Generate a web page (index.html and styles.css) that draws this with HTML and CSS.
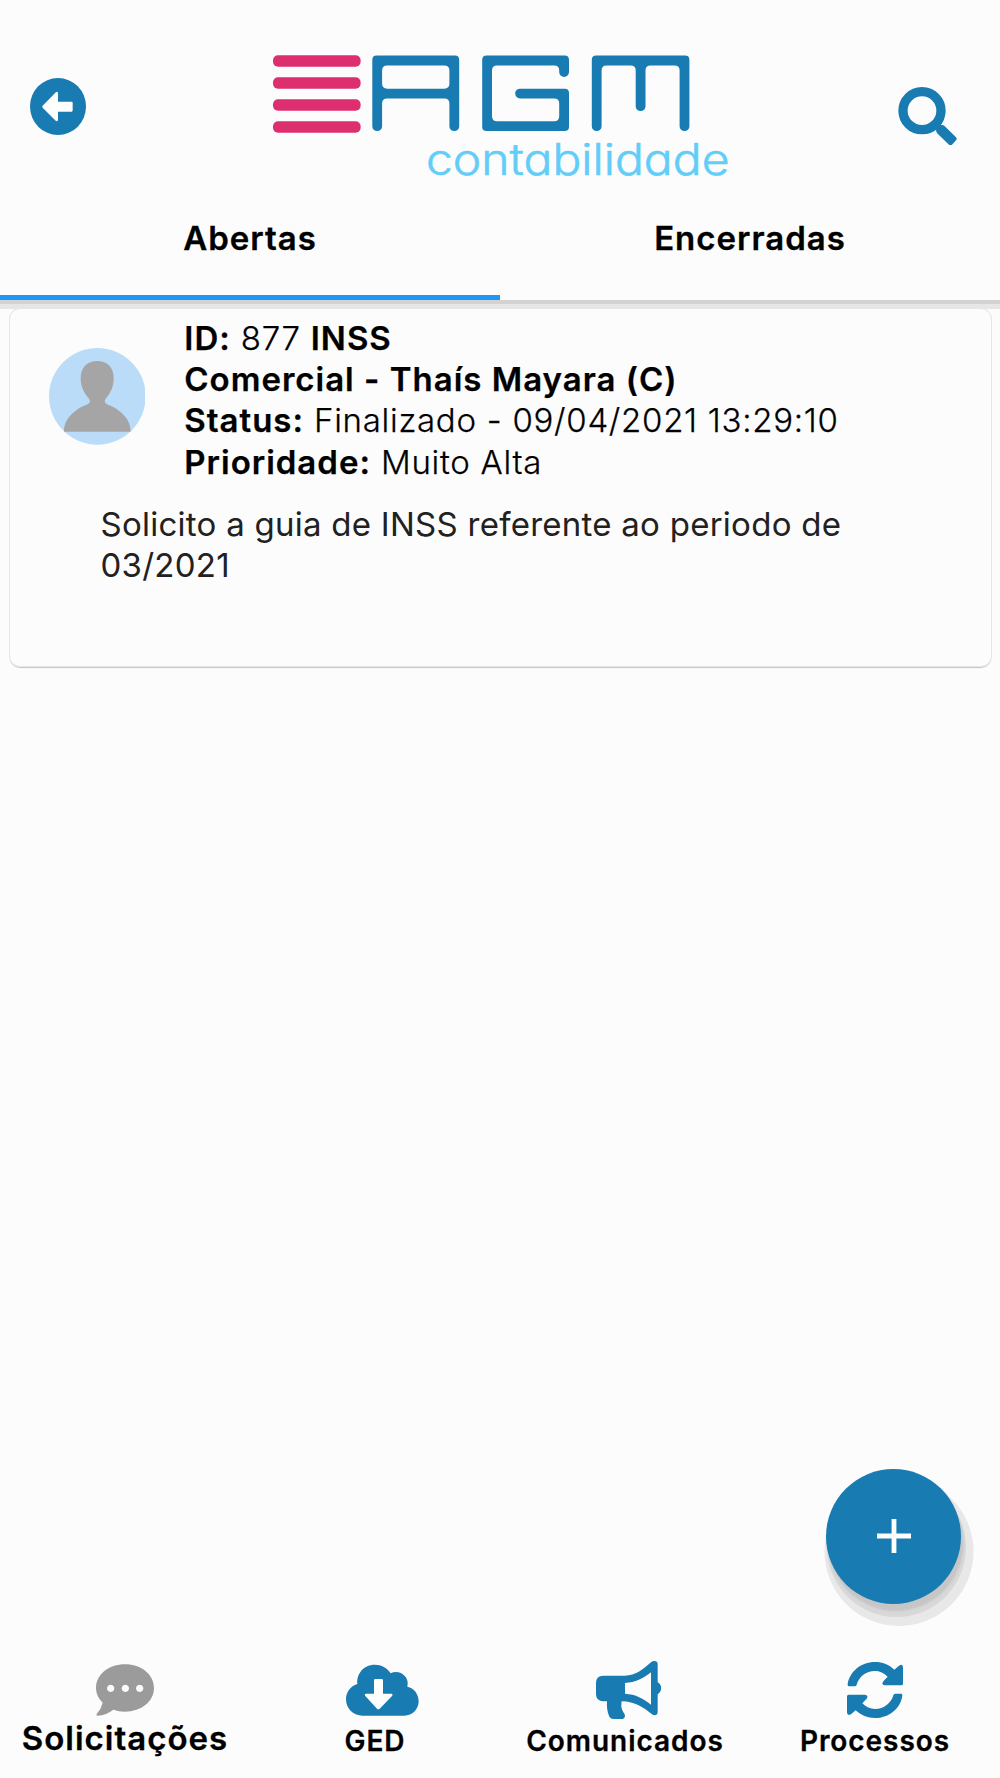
FILE: index.html
```html
<!DOCTYPE html>
<html lang="pt-BR">
<head>
<meta charset="utf-8">
<title>AGM Contabilidade</title>
<link rel="stylesheet" href="styles.css">
</head>
<body>
<div class="app">
  <header class="header">
    <div class="topbar">
      <svg class="back" viewBox="90 113 168 171" aria-label="Voltar"><ellipse cx="174" cy="198.500" rx="84" ry="85.500" fill="#187bb2"/><path d="M128 196L166 157Q174 151 174 160V184H215Q218 184 218 187V210Q218 214 215 214H174V237Q174 246 167 241L128 202Q125 199 128 196Z" fill="#fff"/></svg>
      <svg class="logo" viewBox="270 50 470 145" role="img" aria-label="AGM contabilidade">
        <g fill="#dd2e6f"><rect x="273" y="55.300" width="87.600" height="11.500" rx="5"/><rect x="273" y="77.300" width="87.600" height="11.500" rx="5"/><rect x="273" y="99.300" width="87.600" height="11.500" rx="5"/><rect x="273" y="121.200" width="87.600" height="11.500" rx="5"/></g>
        <g fill="#187bb2" fill-rule="evenodd">
          <path d="M372.300 126.200V60Q372.300 55.600 376.700 55.600H454.800Q459.200 55.600 459.200 60V126.200A4.900 4.900 0 0 1 449.400 126.200V103.500Q449.400 98.400 444.300 98.400H387.200Q382.100 98.400 382.100 103.500V126.200A4.900 4.900 0 0 1 372.300 126.200ZM387.200 65.500Q382.100 65.500 382.100 70.500V83.600Q382.100 88.700 387.200 88.700H444.300Q449.400 88.700 449.400 83.600V70.500Q449.400 65.500 444.300 65.500Z"/>
          <path d="M482.200 60Q482.200 55.600 486.600 55.600H564.600Q569 55.600 569 60V72A4.900 4.900 0 0 1 559.200 72V70.500Q559.200 65.500 554.200 65.500H497Q492 65.500 492 70.500V116.300Q492 121.300 497 121.300H554.200Q559.200 121.300 559.200 116.300V103.500Q559.200 98.400 554.200 98.400H520A4.850 4.850 0 0 1 520 88.700H564.600Q569 88.700 569 93.100V126.700Q569 131.100 564.600 131.100H486.600Q482.200 131.100 482.200 126.700Z"/>
          <path d="M591.800 126.200V60Q591.800 55.600 596.200 55.600H685Q689.400 55.600 689.400 60V126.200A4.900 4.900 0 0 1 679.600 126.200V70.500Q679.600 65.500 674.600 65.500H650.500Q645.500 65.500 645.500 70.500V106.200A4.900 4.900 0 0 1 635.700 106.200V70.500Q635.700 65.500 630.700 65.500H606.600Q601.600 65.500 601.600 70.500V126.200A4.900 4.900 0 0 1 591.800 126.200Z"/>
        </g>
        <text class="logo-sub" x="426" y="175.200" textLength="303.500" lengthAdjust="spacingAndGlyphs">contabilidade</text>
      </svg>
      <svg class="search" viewBox="114 80 177 176" aria-label="Buscar"><circle cx="186" cy="151" r="57" fill="none" stroke="#187bb2" stroke-width="28"/><path d="M230 194H247Q252 195 256 199L288 231Q292 236 288 240L276 253Q272 257 267 253L233 220Q228 215 228 209Z" fill="#187bb2"/></svg>
    </div>
    <nav class="tabs">
      <a class="tab tab-active">Abertas</a>
      <a class="tab">Encerradas</a>
    </nav>
  </header>

  <main class="content">
    <article class="card">
      <div class="card-head">
        <svg class="avatar" viewBox="145 444 290 290"><circle cx="290" cy="589" r="145" fill="#badcf8"/><path d="M290 483C320 483 339 502 339 534C339 562 328 582 315 596C310 602 312 609 319 613C356 627 390 655 390 695H190C190 655 224 627 261 613C268 609 270 602 265 596C252 582 240 562 240 534C240 502 260 483 290 483Z" fill="#a5a5a5"/></svg>
        <div class="info">
          <div class="row"><b>ID:</b> 877 <b>INSS</b></div>
          <div class="row"><b>Comercial - Thaís Mayara (C)</b></div>
          <div class="row"><b>Status:</b> Finalizado - 09/04/2021 13:29:10</div>
          <div class="row"><b>Prioridade:</b> Muito Alta</div>
        </div>
      </div>
      <p class="desc">Solicito a guia de INSS referente ao periodo de<br>03/2021</p>
    </article>
  </main>

  <button class="fab" aria-label="Adicionar"><svg class="plus" viewBox="0 0 34 34"><path d="M0 17H34M17 0V34" stroke="#fff" stroke-width="4.800"/></svg></button>

  <nav class="bottom-nav">
    <a class="nav-item nav-current">
      <svg class="nav-icon" viewBox="240 60 270 180"><path fill="#9b9b9b" fill-rule="evenodd" d="M375 73C424 73 462 104 462 144C462 184 424 215 375 215Q356 215 340 209C327 219 311 226 292 227Q287 226 290 222Q304 206 308 188C296 176 288 161 288 144C288 104 326 73 375 73ZM332 134a11 11 0 1 0 .1 0ZM376 134a11 11 0 1 0 .1 0ZM419 134a11 11 0 1 0 .1 0Z"/></svg>
      <span class="nav-label">Solicitações</span>
    </a>
    <a class="nav-item">
      <svg class="nav-icon" viewBox="990 60 270 180"><path fill="#187bb2" d="M1088 227C1058 227 1038 205 1038 178C1038 157 1051 138 1072 132C1069 99 1093 74 1124 74C1144 74 1162 84 1172 100C1197 87 1230 109 1222 140C1242 144 1256 162 1256 184C1256 208 1237 227 1213 227Z"/><path fill="#fff" d="M1126 117H1145Q1149 117 1149 121V161H1174Q1180 162 1176 168L1139 206Q1135 210 1131 206L1096 168Q1092 162 1098 161H1122V121Q1122 117 1126 117Z"/></svg>
      <span class="nav-label">GED</span>
    </a>
    <a class="nav-item">
      <svg class="nav-icon" viewBox="240 60 270 180"><path fill="#187bb2" fill-rule="evenodd" d="M310 107H375C407 107 427 89 453 67C461 60 473 62 473 71V127C487 134 487 155 473 163V217C473 226 463 228 456 223C430 202 406 185 365 184C362 204 366 210 373 221C378 229 373 237 364 237H341Q332 237 328 230C321 214 320 199 321 184H310Q288 184 288 162V129Q288 107 310 107ZM375 129V161C407 163 430 175 453 194V97C429 115 406 128 375 129Z"/></svg>
      <span class="nav-label">Comunicados</span>
    </a>
    <a class="nav-item">
      <svg class="nav-icon" viewBox="990 60 270 180"><path fill="#187bb2" d="M1047 139Q1042 139 1043 133C1048 96 1082 66 1125 66C1148 66 1167 74 1183 89L1197 77Q1209 70 1209 83V131Q1209 136 1204 136H1156Q1142 135 1150 124L1163 110C1152 99 1139 93 1125 93C1098 93 1077 110 1070 134Q1069 139 1064 139Z"/><path fill="#187bb2" d="M1203 161Q1208 161 1207 167C1202 204 1168 234 1125 234C1102 234 1083 226 1067 211L1053 223Q1041 229 1041 217V169Q1041 164 1046 164H1094Q1107 165 1100 176L1087 190C1098 201 1111 207 1125 207C1152 207 1173 190 1180 166Q1181 161 1186 161Z"/></svg>
      <span class="nav-label">Processos</span>
    </a>
  </nav>
</div>
</body>
</html>
```
FILE: styles.css
```css
* { box-sizing: border-box; }
body {
  margin: 0;
  background: #fcfcfc;
  color: #000;
  font-family: Inter, "Liberation Sans", sans-serif;
}
.app {
  position: relative;
  display: flex;
  flex-direction: column;
  height: 1778px;
  overflow: hidden;
}
.header {
  flex: none;
  height: 300px;
  box-shadow: 0 4px 0 #d3d3d3, 0 9px 0 #e6e6e6;
}
.topbar {
  display: flex;
  justify-content: space-between;
  align-items: flex-start;
  height: 200px;
  padding: 50px 43px 0 30px;
}
.back { width: 56px; height: 57px; margin-top: 27.500px; }
.logo { width: 470px; height: 145px; margin-left: 25px; }
.logo-sub {
  font-size: 43px;
  font-weight: 300;
  font-feature-settings: "cv11";
  fill: #62cdf8;
  stroke: #62cdf8;
  stroke-width: 0.600px;
}
.search { width: 59px; height: 58.700px; margin-top: 36.700px; }
.tabs { display: flex; height: 100px; }
.tab {
  flex: 1;
  padding-top: 18.400px;
  border-bottom: 5px solid transparent;
  text-align: center;
  font-size: 33px;
  line-height: 40px;
  font-weight: 600;
  letter-spacing: 1px;
  -webkit-text-stroke: 0.300px #000;
}
.tab-active { border-bottom-color: #2196f3; }
.content { flex: 1; padding: 9px 9px 0 10px; }
.card {
  height: 357px;
  padding-top: 9px;
  border-radius: 10px;
  background: #fcfcfc;
  box-shadow: 0 0 0 1px #e6e6e6, 0 2px 1px #c4c4c4;
}
.card-head { display: flex; gap: 39px; padding-left: 38.600px; }
.avatar { width: 96.700px; height: 96.700px; margin-top: 30px; }
.row {
  font-size: 33px;
  line-height: 41.200px;
  font-weight: 300;
  letter-spacing: 0.720px;
  white-space: nowrap;
  -webkit-text-stroke: 0.250px #000;
}
.row b { font-weight: 600; letter-spacing: 1px; }
.desc {
  margin: 21.400px 0 0 90.500px;
  font-size: 33px;
  line-height: 41.200px;
  letter-spacing: 0.260px;
  font-weight: 400;
  color: #212121;
  white-space: nowrap;
}
.fab {
  position: absolute;
  left: 826px;
  top: 1468.500px;
  width: 135.300px;
  height: 135.300px;
  padding: 0;
  border: 0;
  border-radius: 50%;
  background: #187bb2;
  display: grid;
  place-items: center;
  box-shadow: 2.500px 7px 2px #c6c6c6, 3px 11px 0 2px #d8d8d8, 5.500px 15px 0 7px #e8e8e8;
}
.plus { width: 34px; height: 34px; }
.bottom-nav {
  flex: none;
  display: grid;
  grid-template-columns: repeat(4, 1fr);
  height: 118px;
}
.nav-item {
  display: flex;
  flex-direction: column;
  align-items: center;
}
.nav-icon { width: 90px; height: 60px; }
.nav-label {
  font-size: 28px;
  line-height: 43px;
  font-weight: 600;
  letter-spacing: 0.950px;
  -webkit-text-stroke: 0.300px #000;
}
.nav-current .nav-label {
  font-size: 33px;
  line-height: 37.500px;
  letter-spacing: 1px;
}
```
